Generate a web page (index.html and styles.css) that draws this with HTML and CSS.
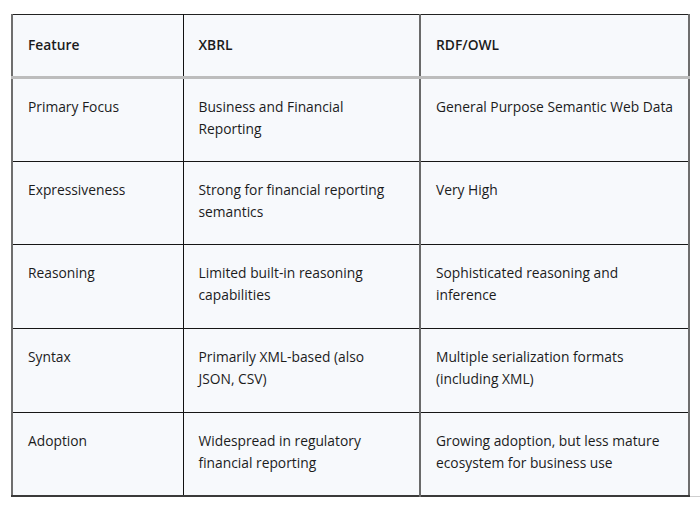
FILE: index.html
```html
<!DOCTYPE html>
<html lang="en">
<head>
<meta charset="utf-8">
<title>XBRL vs RDF/OWL</title>
<link rel="stylesheet" href="styles.css">
</head>
<body>
<div class="wrap">
<table class="cmp">
  <colgroup>
    <col class="c1"><col class="c2"><col class="c3">
  </colgroup>
  <thead>
    <tr><th>Feature</th><th>XBRL</th><th>RDF/OWL</th></tr>
  </thead>
  <tbody>
    <tr><td>Primary Focus</td><td>Business and Financial Reporting</td><td>General Purpose Semantic Web Data</td></tr>
    <tr><td>Expressiveness</td><td>Strong for financial reporting semantics</td><td>Very High</td></tr>
    <tr><td>Reasoning</td><td>Limited built-in reasoning capabilities</td><td>Sophisticated reasoning and inference</td></tr>
    <tr><td>Syntax</td><td>Primarily XML-based (also JSON, CSV)</td><td>Multiple serialization formats (including XML)</td></tr>
    <tr><td>Adoption</td><td>Widespread in regulatory financial reporting</td><td>Growing adoption, but less mature ecosystem for business use</td></tr>
  </tbody>
</table>
<span class="endmark"></span>
</div>
</body>
</html>
```

FILE: styles.css
```css
html, body {
  margin: 0;
  padding: 0;
  background: #ffffff;
}
body {
  font-family: "Open Sans", "Noto Sans", sans-serif;
  font-size: 13.8px;
  color: #1c1c1c;
}
.wrap {
  position: relative;
  padding: 14px 12px 0 11px;
  width: 677px;
}
.cmp {
  border-collapse: collapse;
  table-layout: fixed;
  width: 677px;
  background: #f7f9fc;
  border-top: 1px solid #222;
  border-left: 2px solid #6e6e6e;
  border-right: 2px solid #6e6e6e;
  border-bottom: 2px solid #3a3a3a;
}
.c1 { width: 171px; }
.c2 { width: 237px; }
.c3 { width: 269px; }
th, td {
  text-align: left;
  vertical-align: top;
  padding: 17px 14px 0 15px;
  line-height: 22px;
}
th {
  font-weight: 600;
  height: 63px;
  box-sizing: border-box;
  vertical-align: middle;
  padding-top: 0;
  padding-bottom: 2px;
  border-bottom: 3px solid #bdbdbd;
}
td {
  height: 83.7px;
  box-sizing: border-box;
  border-bottom: 1px solid #161616;
}
td:nth-child(2) {
  padding-right: 20px;
}
th:first-child, td:first-child {
  border-right: 1px solid #111;
}
th:nth-child(2), td:nth-child(2) {
  border-right: 2px solid #6a6a6a;
}
.endmark {
  position: absolute;
  left: 690px;
  top: 496px;
  width: 10px;
  height: 11px;
  border-left: 1px solid #cfcfcf;
  border-top: 1px solid #cfcfcf;
}
```
